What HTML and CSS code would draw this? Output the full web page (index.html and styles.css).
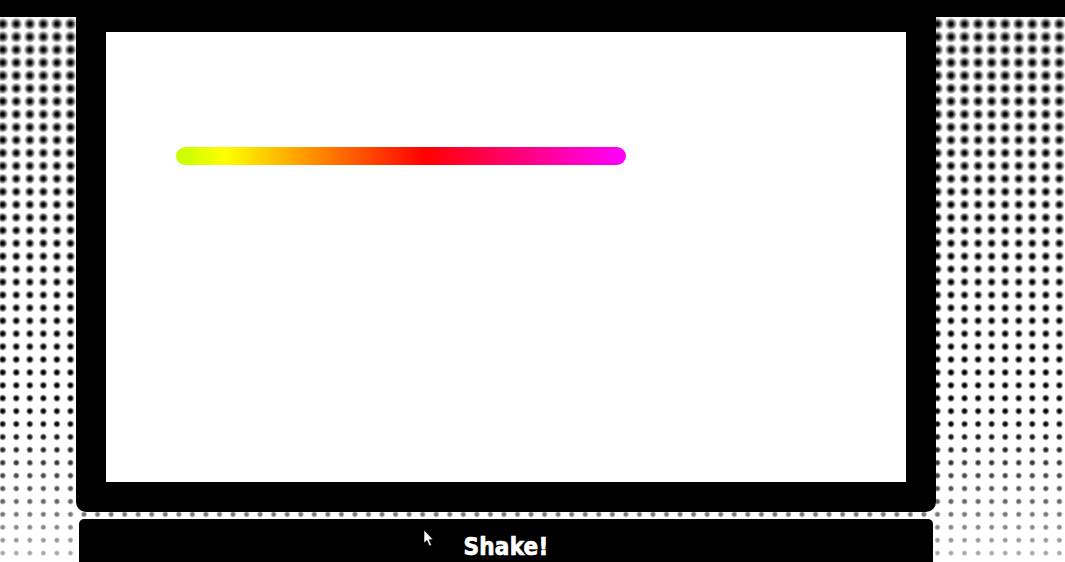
FILE: index.html
```html
<!DOCTYPE html>
<html lang="en">
<head>
    <meta charset="UTF-8">
    <title>Shake!</title>
    <link rel="stylesheet" href="styles.css">
</head>
<body>

<div class="topbar"></div>

<div class="page">
    <div class="frame">
        <div class="canvas">
            <div class="bar"></div>
        </div>
    </div>
    <button class="shake" type="button">
        <svg class="cursor" width="12" height="18" viewBox="0 0 12 18">
            <path d="M1 1 L1 14 L4 11.5 L6.5 17 L8.5 16 L6 10.8 L10 10.5 Z" fill="#fff" stroke="#000" stroke-width="0.6"/>
        </svg>
        Shake!
    </button>
</div>

</body>
</html>
```

FILE: styles.css
```css
html, body {
    margin: 0;
    padding: 0;
    height: 100%;
    overflow: hidden;
}

body {
    background-color: #fff;
    background-image:
        linear-gradient(to bottom, #000 0, #000 420px, #b0b0b0 562px),
        linear-gradient(to bottom, #000 0, #b0b0b0 562px),
        radial-gradient(circle at center, #000 1.5px, #fff 6.5px);
    background-size: 100% 562px, 100% 562px, 13.55px 12.92px;
    background-position: 0 0, 0 0, -4.07px 4.62px;
    background-repeat: no-repeat, no-repeat, repeat;
    background-blend-mode: screen, color-dodge, normal;
}

.topbar {
    height: 17px;
    margin-bottom: -17px;
    background-color: #000;
}

.page {
    width: 860px;
    margin-left: 76px;
}

.frame {
    padding: 32px 30px 30px;
    background-color: #000;
    border-radius: 0 0 10px 10px;
}

.canvas {
    height: 450px;
    padding-top: 115px;
    box-sizing: border-box;
    background-color: #fff;
}

.bar {
    width: 450px;
    height: 18px;
    margin-left: 70px;
    border-radius: 9px;
    background: linear-gradient(to right, #ccff00 0, #ccff00 9px, #ffff00 49px, #ff0000 249px, #ff00ff 449px);
}

.shake {
    position: relative;
    display: block;
    width: 854px;
    height: 43px;
    margin: 7px 0 0 3px;
    padding: 13px 0 0;
    border: none;
    border-radius: 5px 5px 0 0;
    background-color: #000;
    color: #fff;
    font-family: "DejaVu Sans", sans-serif;
    font-stretch: condensed;
    font-weight: bold;
    font-size: 24px;
    line-height: 28px;
    letter-spacing: 0.2px;
    -webkit-text-stroke: 0.7px #fff;
    text-align: center;
}

.cursor {
    position: absolute;
    left: 344px;
    top: 10px;
}
```
